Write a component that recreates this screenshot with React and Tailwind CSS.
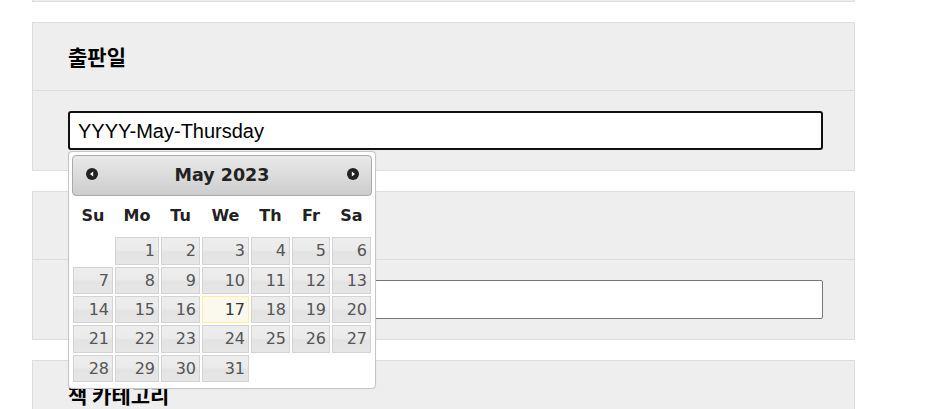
import React from "react";

const colW = ["w-[42px]", "w-[46px]", "w-[41px]", "w-[49px]", "w-[41px]", "w-[40px]", "w-[41px]"];
const rowH = ["h-[30px]", "h-[29px]", "h-[29px]", "h-[30px]", "h-[29px]"];
const dayNames = ["Su", "Mo", "Tu", "We", "Th", "Fr", "Sa"];

function buildWeeks() {
  const cells = [null];
  for (let d = 1; d <= 31; d++) cells.push(d);
  while (cells.length < 35) cells.push(null);
  const weeks = [];
  for (let i = 0; i < 35; i += 7) weeks.push(cells.slice(i, i + 7));
  return weeks;
}

function PrevIcon() {
  return (
    <svg width="12" height="12" viewBox="0 0 12 12">
      <circle cx="6" cy="6" r="6" fill="#222222" />
      <path d="M7.2 3.4 L4 6 L7.2 8.6 Z" fill="#ffffff" />
    </svg>
  );
}

function NextIcon() {
  return (
    <svg width="12" height="12" viewBox="0 0 12 12">
      <circle cx="6" cy="6" r="6" fill="#222222" />
      <path d="M4.8 3.4 L8 6 L4.8 8.6 Z" fill="#ffffff" />
    </svg>
  );
}

function DatePicker() {
  const weeks = buildWeeks();
  return (
    <div className="absolute left-0 top-[40px] z-10 w-[308px] rounded-[4px] border border-[#c5c5c5] bg-white px-[3px] pt-[3px] pb-[5px] font-['DejaVu_Sans',sans-serif] text-[#222222] shadow-[0_0_1px_rgba(0,0,0,0.15)]">
      <div className="relative flex h-[41px] items-center justify-center rounded-[4px] border border-[#aaaaaa] bg-[linear-gradient(#e9e9e9,#cdcdcd)]">
        <span className="absolute left-[13px] top-[12px] flex"><PrevIcon /></span>
        <span className="text-[17.5px] font-bold leading-none">May 2023</span>
        <span className="absolute right-[12px] top-[12px] flex"><NextIcon /></span>
      </div>
      <div className="flex h-[40px] items-center">
        {dayNames.map((n, i) => (
          <div key={n} className={`${colW[i]} text-center text-[16px] font-bold leading-none`}>{n}</div>
        ))}
      </div>
      {weeks.map((w, r) => (
        <div key={r} className={`flex ${rowH[r]}`}>
          {w.map((d, c) => (
            <div key={c} className={`${colW[c]} h-full p-[1px]`}>
              {d !== null &&
                (d === 17 ? (
                  <div className="flex h-full items-center justify-end border border-[#fcefa1] bg-[#fbf9ee] pr-[3px] text-[16px] leading-none text-[#363636]">
                    {d}
                  </div>
                ) : (
                  <div className="flex h-full items-center justify-end border border-[#d3d3d3] bg-[linear-gradient(#ededed_0%,#ebebeb_45%,#e3e3e3_55%,#e6e6e6_100%)] pr-[3px] text-[16px] leading-none text-[#555555]">
                    {d}
                  </div>
                ))}
            </div>
          ))}
        </div>
      ))}
    </div>
  );
}

function Card({ title, children }) {
  return (
    <div className="border border-[#dddddd] bg-[#eeeeee]">
      <div className="flex h-[68px] items-center border-b border-[#dddddd] px-[35px]">
        <h3 className="font-['Noto_Sans_CJK_KR',sans-serif] text-[21px] font-bold leading-none text-black">{title}</h3>
      </div>
      <div className="px-[35px] pt-[20px] pb-[20px]">{children}</div>
    </div>
  );
}

export default function App() {
  return (
    <div className="min-h-[409px] w-[950px] overflow-hidden bg-white">
      <div className="ml-[32px] flex w-[823px] flex-col gap-[20px]">
        <div className="h-[2px] border-x border-b border-[#dddddd] bg-[#eeeeee]" />
        <Card title="출판일">
          <div className="relative">
            <div className="flex h-[39px] w-[755px] items-center rounded-[3px] border-2 border-[#101010] bg-white pl-[8px] font-['Liberation_Sans',Arial,sans-serif] text-[20px] text-black">
              YYYY-May-Thursday
            </div>
            <DatePicker />
          </div>
        </Card>
        <Card title="">
          <div className="h-[39px] w-[755px] rounded-[2px] border border-[#767676] bg-white" />
        </Card>
        <Card title="책 카테고리">
          <div className="h-[39px] w-[755px] rounded-[2px] border border-[#767676] bg-white" />
        </Card>
      </div>
    </div>
  );
}
